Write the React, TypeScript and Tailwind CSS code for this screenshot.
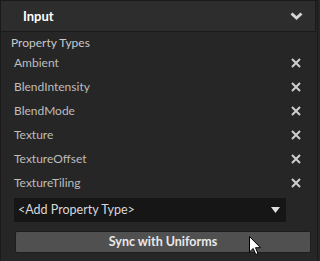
import React from "react";

const items = ["Ambient", "BlendIntensity", "BlendMode", "Texture", "TextureOffset", "TextureTiling"];

function XIcon() {
  return (
    <svg width="10" height="10" viewBox="0 0 10 10" className="text-[#d0d0d0]">
      <path d="M1 1L9 9M9 1L1 9" stroke="currentColor" strokeWidth="2" />
    </svg>
  );
}

export default function App() {
  return (
    <div className="relative w-[320px] h-[261px] bg-[#262626] overflow-hidden" style={{ fontFamily: 'Lato, "Noto Sans", sans-serif' }}>
      <div className="w-[318px] h-full border-l border-r border-t border-[#1a1a1a]">
        {/* Header */}
        <div className="h-[31px] w-[315px] bg-[#2d2d2d] border-b border-r border-[#1a1a1a] flex items-center justify-between pl-[22px] pr-[12px]">
          <span className="text-white font-bold text-[13px] pt-[1px]">Input</span>
          <svg width="13" height="8" viewBox="0 0 13 8">
            <path d="M1.5 1.5L6.5 6L11.5 1.5" stroke="#d4d4d4" strokeWidth="3" fill="none" />
          </svg>
        </div>

        <div className="pl-[10px] pt-[2px] text-[12px] text-[#c9c9c9] leading-[17px]">Property Types</div>

        <div className="flex flex-col pl-[13px] pr-[16px]">
          {items.map((it) => (
            <div key={it} className="h-[24px] flex items-center justify-between">
              <span className="text-[12px] text-[#bdbdbd]">{it}</span>
              <XIcon />
            </div>
          ))}
        </div>

        <div className="ml-[13px] mt-[3px] w-[272px] h-[24px] bg-[#161616] flex items-center justify-between pl-[4px] pr-[6px]">
          <span className="text-[12.5px] text-[#d8d8d8]">&lt;Add Property Type&gt;</span>
          <svg width="9" height="6" viewBox="0 0 9 6">
            <path d="M0 0H9L4.5 6Z" fill="#e0e0e0" />
          </svg>
        </div>

        <div className="ml-[14px] mt-[9px] w-[296px] h-[22px] bg-[#505050] border border-[#1e1e1e] rounded-[2px] flex items-center justify-center">
          <span className="text-[12.5px] font-bold text-[#e8e8e8]">Sync with Uniforms</span>
        </div>
      </div>

      {/* mouse cursor */}
      <svg className="absolute left-[249px] top-[236px]" width="13" height="20" viewBox="0 0 13 20">
        <path d="M0.5 0.5V16L4.2 12.5L6.8 18.5L9 17.5L6.5 11.7H11.5Z" fill="white" stroke="black" strokeWidth="1" />
      </svg>
    </div>
  );
}
